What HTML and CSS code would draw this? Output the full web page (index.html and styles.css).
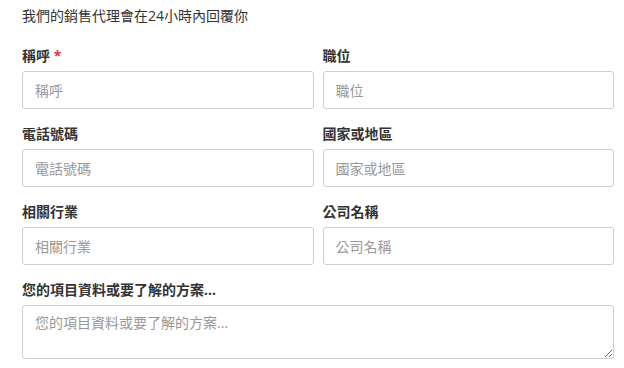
FILE: index.html
```html
<!DOCTYPE html>
<html lang="zh-Hant">
<head>
    <meta charset="UTF-8">
    <meta name="viewport" content="width=device-width, initial-scale=1.0">
    <title>聯絡我們</title>
    <link rel="stylesheet" href="styles.css">
</head>
<body>
    <form class="contact-form">
        <p class="intro">我們的銷售代理會在24小時內回覆你</p>
        <div class="fields">
            <div class="field">
                <label for="salutation">稱呼 <span class="req">*</span></label>
                <input id="salutation" type="text" placeholder="稱呼">
            </div>
            <div class="field">
                <label for="title">職位</label>
                <input id="title" type="text" placeholder="職位">
            </div>
            <div class="field">
                <label for="phone">電話號碼</label>
                <input id="phone" type="text" placeholder="電話號碼">
            </div>
            <div class="field">
                <label for="country">國家或地區</label>
                <input id="country" type="text" placeholder="國家或地區">
            </div>
            <div class="field">
                <label for="industry">相關行業</label>
                <input id="industry" type="text" placeholder="相關行業">
            </div>
            <div class="field">
                <label for="company">公司名稱</label>
                <input id="company" type="text" placeholder="公司名稱">
            </div>
            <div class="field wide">
                <label for="message">您的項目資料或要了解的方案...</label>
                <textarea id="message" placeholder="您的項目資料或要了解的方案..."></textarea>
            </div>
        </div>
    </form>
</body>
</html>
```
FILE: styles.css
```css
body {
    margin: 0;
    background: #fff;
    font-family: "Open Sans", "Noto Sans CJK TC", sans-serif;
    color: #333;
}

.contact-form {
    padding: 5px 10px 0 22px;
}

.intro {
    margin: 0 0 21px;
    font-size: 14px;
    line-height: 21px;
    color: #333;
}

.fields {
    display: grid;
    grid-template-columns: 1fr 1fr;
    column-gap: 9px;
    row-gap: 16px;
}

.field {
    display: flex;
    flex-direction: column;
}

.field.wide {
    grid-column: 1 / 3;
}

.field label {
    font-size: 14px;
    font-weight: bold;
    line-height: 18px;
    margin-bottom: 6px;
    color: #333;
}

.req {
    color: #e2353b;
}

.field input,
.field textarea {
    box-sizing: border-box;
    width: 100%;
    margin: 0;
    border: 1px solid #cfcfcf;
    border-radius: 3px;
    background: #fff;
    font-family: "Open Sans", "Noto Sans CJK TC", sans-serif;
    font-size: 14px;
    color: #333;
    padding: 0 12px;
    outline: none;
}

.field input {
    height: 38px;
}

.field textarea {
    height: 54px;
    padding-top: 8px;
    line-height: 18px;
    resize: vertical;
}

.field input::placeholder,
.field textarea::placeholder {
    color: #999;
}
```
